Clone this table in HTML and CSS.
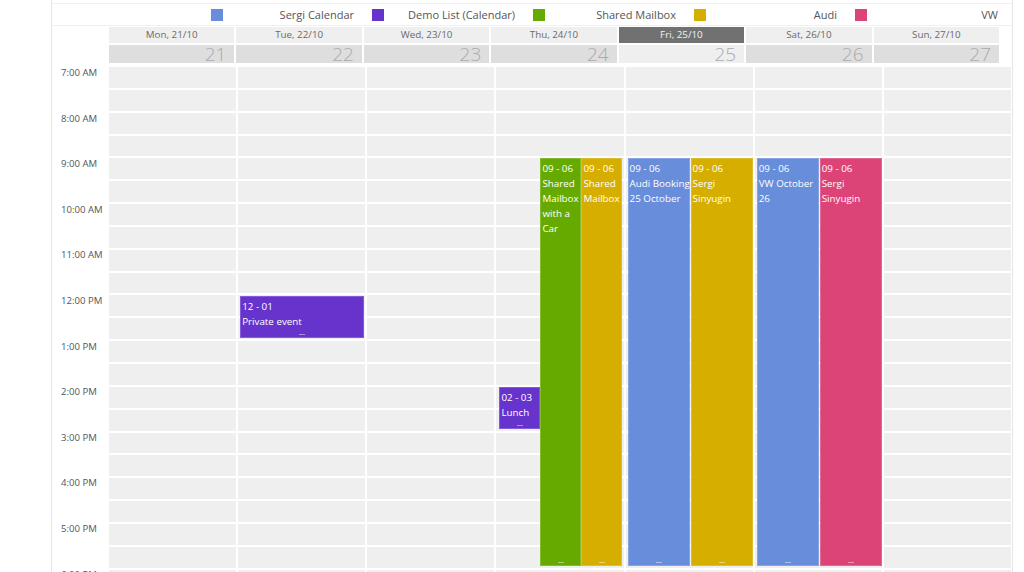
FILE: index.html
```html
<!DOCTYPE html>
<html>
<head>
<meta charset="utf-8">
<link rel="stylesheet" href="styles.css">
</head>
<body>
<div class="frame">
  <div class="legend">
    <div class="legend-item"><span class="swatch c-blue"></span><span class="legend-label">Sergi Calendar</span></div>
    <div class="legend-item"><span class="swatch c-purple"></span><span class="legend-label">Demo List (Calendar)</span></div>
    <div class="legend-item"><span class="swatch c-green"></span><span class="legend-label">Shared Mailbox</span></div>
    <div class="legend-item"><span class="swatch c-yellow"></span><span class="legend-label">Audi</span></div>
    <div class="legend-item"><span class="swatch c-pink"></span><span class="legend-label">VW</span></div>
  </div>

  <div class="days-head">
    <div class="dname">Mon, 21/10</div>
    <div class="dname">Tue, 22/10</div>
    <div class="dname">Wed, 23/10</div>
    <div class="dname">Thu, 24/10</div>
    <div class="dname today">Fri, 25/10</div>
    <div class="dname">Sat, 26/10</div>
    <div class="dname">Sun, 27/10</div>
    <div class="dnum">21</div>
    <div class="dnum">22</div>
    <div class="dnum">23</div>
    <div class="dnum">24</div>
    <div class="dnum today">25</div>
    <div class="dnum">26</div>
    <div class="dnum">27</div>
  </div>

  <div class="body">
    <div class="gutter">
      <div class="hour">7:00 AM</div>
      <div class="hour">8:00 AM</div>
      <div class="hour">9:00 AM</div>
      <div class="hour">10:00 AM</div>
      <div class="hour">11:00 AM</div>
      <div class="hour">12:00 PM</div>
      <div class="hour">1:00 PM</div>
      <div class="hour">2:00 PM</div>
      <div class="hour">3:00 PM</div>
      <div class="hour">4:00 PM</div>
      <div class="hour">5:00 PM</div>
      <div class="hour">6:00 PM</div>
    </div>
    <div class="days" id="days">
      <div class="day"></div>
      <div class="day">
        <div class="event c-purple ev-noon"><div>12 - 01</div><div>Private event</div><span class="handle"></span></div>
      </div>
      <div class="day"></div>
      <div class="day">
        <div class="event c-purple ev-lunch third-1"><div>02 - 03</div><div>Lunch</div><span class="handle"></span></div>
        <div class="event c-green ev-long third-2"><div>09 - 06</div><div>Shared<br>Mailbox<br>with a<br>Car</div><span class="handle"></span></div>
        <div class="event c-yellow ev-long third-3"><div>09 - 06</div><div>Shared<br>Mailbox</div><span class="handle"></span></div>
      </div>
      <div class="day">
        <div class="event c-blue ev-long half-1"><div>09 - 06</div><div>Audi Booking<br>25 October</div><span class="handle"></span></div>
        <div class="event c-yellow ev-long half-2"><div>09 - 06</div><div>Sergi<br>Sinyugin</div><span class="handle"></span></div>
      </div>
      <div class="day">
        <div class="event c-blue ev-long half-1"><div>09 - 06</div><div>VW October<br>26</div><span class="handle"></span></div>
        <div class="event c-pink ev-long half-2"><div>09 - 06</div><div>Sergi<br>Sinyugin</div><span class="handle"></span></div>
      </div>
      <div class="day"></div>
    </div>
  </div>
</div>
<script>
  document.querySelectorAll('.day').forEach(function (d) {
    for (var i = 0; i < 24; i++) {
      var s = document.createElement('div');
      s.className = 'slot';
      d.insertBefore(s, d.firstChild);
    }
  });
</script>
</body>
</html>
```

FILE: styles.css
```css
html, body {
  margin: 0;
  padding: 0;
  background: #fff;
  font-family: "Open Sans", "Liberation Sans", sans-serif;
}

.frame {
  margin-left: 51px;
  width: 962px;
  height: 572px;
  box-sizing: border-box;
  border-left: 1px solid #e6e6e6;
  border-right: 1px solid #e6e6e6;
  padding-top: 3px;
  overflow: hidden;
}

/* legend */
.legend {
  display: flex;
  justify-content: flex-end;
  height: 21px;
  border-top: 1px solid #f0f0f0;
  border-bottom: 1px solid #f0f0f0;
  margin-right: -4px;
}
.legend-item {
  width: 161px;
  display: flex;
  align-items: center;
  justify-content: space-between;
  padding-right: 18px;
  box-sizing: border-box;
}
.swatch {
  width: 12px;
  height: 12px;
  display: block;
}
.legend-label {
  font-size: 11px;
  color: #555;
  line-height: 16px;
}

.c-blue { background: #688ddb; }
.c-purple { background: #6733cd; }
.c-green { background: #66aa00; }
.c-yellow { background: #d5ae00; }
.c-pink { background: #dc4477; }

/* day header */
.days-head {
  display: grid;
  grid-template-columns: repeat(7, 1fr);
  grid-template-rows: 16px 18px;
  column-gap: 2px;
  row-gap: 2px;
  margin: 1px 13px 0 57px;
}
.dname {
  background: #efefef;
  color: #6a6a6a;
  font-size: 9.8px;
  line-height: 16px;
  text-align: center;
}
.dname.today {
  background: #717171;
  color: #f2f2f2;
}
.dnum {
  background: #dedede;
  color: #ababab;
  font-size: 19px;
  font-weight: 300;
  line-height: 18px;
  text-align: right;
  padding-right: 8px;
}
.dnum.today {
  background: #efefef;
}

/* body */
.body {
  display: flex;
  margin-top: 4px;
}
.gutter {
  width: 57px;
  flex: none;
  margin-top: -1px;
}
.hour {
  height: 45.6px;
  box-sizing: border-box;
  padding-left: 9px;
  font-size: 9.6px;
  line-height: 14px;
  color: #555;
}
.days {
  flex: 1;
  display: grid;
  grid-template-columns: repeat(7, 1fr);
  column-gap: 2px;
  margin-right: 1px;
}
.day {
  position: relative;
}
.slot {
  height: 22.85px;
  box-sizing: border-box;
  background: #efefef;
  border-bottom: 2px solid #fff;
}

/* events */
.event {
  position: absolute;
  box-sizing: border-box;
  padding: 3px 0 0 2px;
  color: #fff;
  font-size: 9.8px;
  line-height: 15px;
  white-space: nowrap;
  box-shadow: inset 0 0 0 1px rgba(255, 255, 255, 0.2);
}
.handle {
  position: absolute;
  left: 50%;
  bottom: 3px;
  width: 6px;
  height: 1px;
  margin-left: -3px;
  background: rgba(255, 255, 255, 0.45);
}
.ev-long { top: 91.4px; height: 408px; }
.ev-noon { top: 228.5px; height: 42px; }
.ev-lunch { top: 319.9px; height: 42px; }

.ev-noon { left: 2px; right: 1px; }
.third-1 { left: 3px; width: 41px; }
.third-2 { left: 44px; width: 41px; }
.third-3 { left: 85px; width: 41px; }
.half-1 { left: 2px; width: 62px; }
.half-2 { left: 65px; width: 62px; }
```
